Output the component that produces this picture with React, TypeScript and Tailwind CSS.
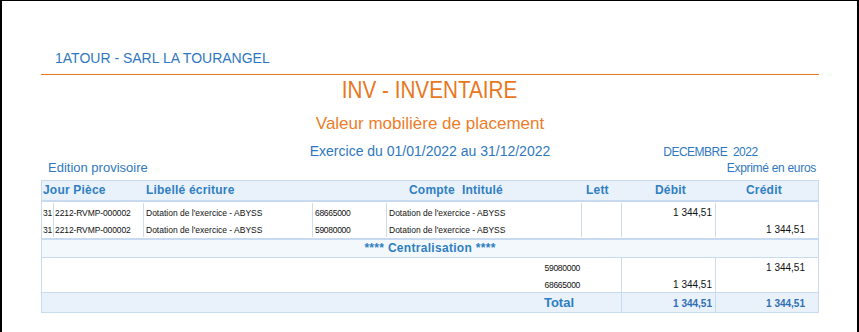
import React from "react";

const cols = "grid grid-cols-[11px_90px_169px_74px_195px_40px_94px_103px]";
const cell = "border-l border-[#cddced]";

type Entry = {
  day: string;
  piece: string;
  label: string;
  account: string;
  title: string;
  debit: string;
  credit: string;
};

const entries: Entry[] = [
  {
    day: "31",
    piece: "2212-RVMP-000002",
    label: "Dotation de l'exercice - ABYSS",
    account: "68665000",
    title: "Dotation de l'exercice - ABYSS",
    debit: "1 344,51",
    credit: "",
  },
  {
    day: "31",
    piece: "2212-RVMP-000002",
    label: "Dotation de l'exercice - ABYSS",
    account: "59080000",
    title: "Dotation de l'exercice - ABYSS",
    debit: "",
    credit: "1 344,51",
  },
];

const summary = [
  { account: "59080000", debit: "", credit: "1 344,51" },
  { account: "68665000", debit: "1 344,51", credit: "" },
];

function EntryRow({ e }: { e: Entry }) {
  const small = "pt-[4px] leading-[12px] text-[8.5px] text-[#111] whitespace-nowrap overflow-hidden";
  const amount = "pt-[4px] leading-[12px] text-[10px] text-[#111] text-right whitespace-nowrap";
  return (
    <div className={`${cols} h-[17px]`}>
      <div className={`${small} pl-[1px] tracking-[-0.2px]`}>{e.day}</div>
      <div className={`${cell} ${small} pl-[1px] tracking-[-0.1px]`}>{e.piece}</div>
      <div className={`${cell} ${small} pl-[2px]`}>{e.label}</div>
      <div className={`${cell} ${small} pl-[2px] tracking-[-0.3px]`}>{e.account}</div>
      <div className={`${cell} ${small} pl-[2px]`}>{e.title}</div>
      <div className={`${cell}`} />
      <div className={`${cell} ${amount} pr-[3px]`}>{e.debit}</div>
      <div className={`${cell} ${amount} pr-[13px]`}>{e.credit}</div>
    </div>
  );
}

function SummaryRow({ account, debit, credit }: { account: string; debit: string; credit: string }) {
  const amount = "pt-[4px] leading-[12px] text-[10px] text-[#111] text-right whitespace-nowrap";
  return (
    <div className={`${cols} h-[17px]`}>
      <div className="col-span-5 pt-[4px] pr-[1px] text-right text-[8.5px] leading-[12px] tracking-[-0.3px] text-[#111]">
        {account}
      </div>
      <div />
      <div className={`${cell} ${amount} pr-[3px]`}>{debit}</div>
      <div className={`${cell} ${amount} pr-[13px]`}>{credit}</div>
    </div>
  );
}

export default function App() {
  return (
    <div className="w-[859px] h-[332px] overflow-hidden bg-white border-t border-l-2 border-r-2 border-black font-['Liberation_Sans',Arial,sans-serif]">
      <div className="ml-[39px] w-[778px] pt-[49px]">
        {/* Company */}
        <div className="h-[16px] pl-[14px] text-[14px] leading-[16px] text-[#2f78bf]">
          1ATOUR - SARL LA TOURANGEL
        </div>
        <div className="mt-[8px] h-px bg-[#e8771e]" />

        {/* Journal titles */}
        <div className="mt-[2px] h-[26px] text-center">
          <span className="inline-block scale-x-[0.9] text-[23px] leading-[26px] text-[#e8771e]">
            INV - INVENTAIRE
          </span>
        </div>
        <div className="mt-[11px] h-[20px] text-center text-[17px] leading-[20px] text-[#eb7d2a]">
          Valeur mobilière de placement
        </div>
        <div className="mt-[9px] grid h-[16px] grid-cols-[1fr_auto_1fr] items-baseline">
          <div />
          <div className="text-[14px] leading-[16px] text-[#2f78bf]">
            Exercice du 01/01/2022 au 31/12/2022
          </div>
          <div className="whitespace-pre pl-[113px] text-[12px] leading-[16px] tracking-[-0.5px] text-[#2f78bf]">
            DECEMBRE  2022
          </div>
        </div>
        <div className="mt-[1px] flex h-[15px] items-baseline justify-between">
          <span className="pl-[7px] text-[13px] leading-[15px] text-[#2f78bf]">Edition provisoire</span>
          <span className="pr-[3px] text-[12px] leading-[15px] tracking-[-0.3px] text-[#2f78bf]">
            Exprimé en euros
          </span>
        </div>

        {/* Journal table */}
        <div className="mt-[5px]">
          <div
            className={`${cols} h-[22px] border-t border-x border-b-2 border-[#c7daef] bg-[#e9f1fb] text-[12px] font-bold leading-[19px] tracking-[0.2px] text-[#2f7fc1]`}
          >
            <div className="col-span-2 pl-[1px]">Jour Pièce</div>
            <div className="pl-[3px]">Libellé écriture</div>
            <div className="col-span-2 whitespace-pre pl-[97px]">Compte  Intitulé</div>
            <div className="pl-[5px]">Lett</div>
            <div className="pl-[34px]">Débit</div>
            <div className="pl-[31px]">Crédit</div>
          </div>

          <div className="border-x border-b-2 border-[#c7daef] pt-[1px] pb-[1px]">
            {entries.map((e, i) => (
              <EntryRow key={i} e={e} />
            ))}
          </div>

          <div className="h-[18px] border-x border-b border-[#c7daef] bg-[#f3f8fd] text-center text-[12px] font-bold leading-[17px] tracking-[0.3px] text-[#2f7fc1]">
            **** Centralisation ****
          </div>

          <div className="border-x border-[#c7daef]">
            {summary.map((s, i) => (
              <SummaryRow key={i} {...s} />
            ))}
          </div>

          <div
            className={`${cols} h-[21px] border border-[#c7daef] bg-[#e9f1fb] text-[#2f6fb3]`}
          >
            <div className="col-span-5 pr-[7px] text-right text-[13px] font-bold leading-[19px] text-[#2f7fc1]">
              Total
            </div>
            <div />
            <div className="border-l border-[#c7daef] pt-[5px] pr-[3px] text-right text-[10px] font-bold leading-[12px]">
              1 344,51
            </div>
            <div className="border-l border-[#c7daef] pt-[5px] pr-[13px] text-right text-[10px] font-bold leading-[12px]">
              1 344,51
            </div>
          </div>
        </div>
      </div>
    </div>
  );
}
